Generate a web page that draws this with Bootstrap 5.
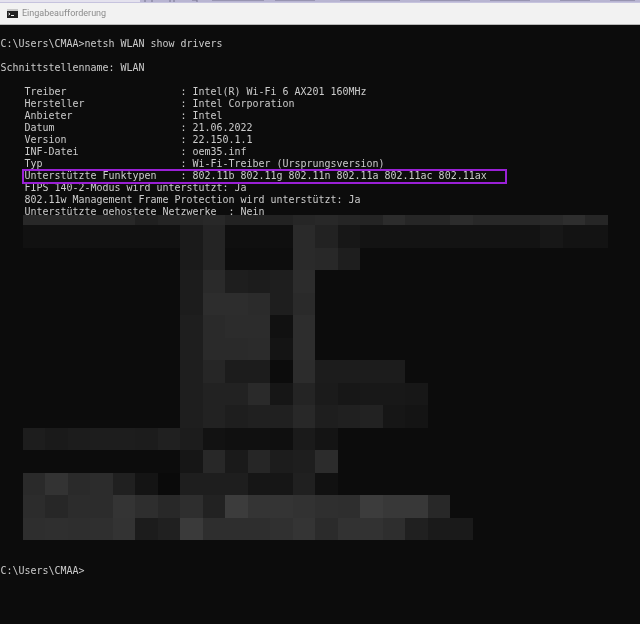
<!DOCTYPE html>
<html lang="de">
<head>
<meta charset="utf-8">
<title>Eingabeaufforderung</title>
<link href="https://cdn.jsdelivr.net/npm/bootstrap@5.3.0/dist/css/bootstrap.min.css" rel="stylesheet">
<style>
html,body{height:100%;background:#0c0c0c;overflow:hidden}
.top-strip{height:3px;display:block;width:100%}
.win-title{height:21px;background:#f2f2f2;border-bottom:1px solid #b9b9b9;box-sizing:content-box;padding-left:7px;gap:4px}
.win-title svg{flex:none}
.win-label{font:9px/1 Roboto,"Noto Sans",sans-serif;color:#8c8c8c;filter:blur(.25px)}
.console{position:relative;padding-top:13px;background:#0c0c0c;color:#cccccc}
.cline{font:9.98px/12px "DejaVu Sans Mono","Liberation Mono",monospace;height:12px;white-space:pre;filter:blur(.3px);margin:0;padding-left:.5px}
.mosaic{display:block;margin-top:-3px;filter:blur(.35px);position:relative}
.prompt-end{margin-top:25px}
.hl-box{position:absolute;left:22px;top:144px;width:485px;height:14.5px;border:2px solid #9a20d6}
</style>
</head>
<body>
<svg class="top-strip" viewBox="0 0 640 3" preserveAspectRatio="none" aria-hidden="true">
  <rect width="640" height="3" fill="#e4e2ee"/>
  <rect x="0" y="2" width="640" height="1" fill="#c6c3de"/>
  <rect x="140" y="0" width="500" height="2" fill="#b8b5d2"/>
  <path d="M145 0v2M152 0v2M170 0v2M174 0v2M192 0h5v2M212 0h52M275 0h40M340 0h60M420 0h50M490 0h40M560 0h30M610 0h25" stroke="#77758f" stroke-width="1" fill="none"/>
</svg>
<div class="win-title d-flex align-items-center">
  <svg width="11" height="9" viewBox="0 0 11 9" aria-hidden="true">
    <rect width="11" height="9" fill="#222"/>
    <rect width="11" height="2" fill="#c9c9c9"/>
    <path d="M1.500 4l1.500 1-1.500 1M4 6.500h3" stroke="#eee" stroke-width="1" fill="none"/>
  </svg>
  <span class="win-label">Eingabeaufforderung</span>
</div>
<main class="console">
  <pre class="cline">C:\Users\CMAA&gt;netsh WLAN show drivers</pre>
  <pre class="cline"> </pre>
  <pre class="cline">Schnittstellenname: WLAN</pre>
  <pre class="cline"> </pre>
  <pre class="cline">    Treiber                   : Intel(R) Wi-Fi 6 AX201 160MHz</pre>
  <pre class="cline">    Hersteller                : Intel Corporation</pre>
  <pre class="cline">    Anbieter                  : Intel</pre>
  <pre class="cline">    Datum                     : 21.06.2022</pre>
  <pre class="cline">    Version                   : 22.150.1.1</pre>
  <pre class="cline">    INF-Datei                 : oem35.inf</pre>
  <pre class="cline">    Typ                       : Wi-Fi-Treiber (Ursprungsversion)</pre>
  <pre class="cline">    Unterstützte Funktypen    : 802.11b 802.11g 802.11n 802.11a 802.11ac 802.11ax</pre>
  <pre class="cline">    FIPS 140-2-Modus wird unterstützt: Ja</pre>
  <pre class="cline">    802.11w Management Frame Protection wird unterstützt: Ja</pre>
  <pre class="cline">    Unterstützte gehostete Netzwerke  : Nein</pre>
  <svg class="mosaic" id="mosaic" width="640" height="325" viewBox="0 0 640 325" aria-hidden="true"></svg>
  <pre class="cline prompt-end">C:\Users\CMAA&gt;</pre>
  <div class="hl-box"></div>
</main>
<script>
// [row top, row bottom, first column, grey value per cell]
var rows=[
 [215,225,1,"28 28 28 28 28 20 24 26 28 22 22 22 26 28 25 24 2c 26 26 2c 28 28 28 2a 2e 26"],
 [225,247.5,1,"11 11 11 11 11 11 11 1a 24 0f 0f 0f 2a 22 17 13 13 13 13 13 13 13 13 17 13 13"],
 [247.5,270,8,"1a 24 0d 0d 0d 2a 28 1e"],
 [270,292.5,8,"1c 2a 1e 1c 1e 2c"],
 [292.5,315,8,"1c 2d 2d 2b 1e 2a"],
 [315,337.5,8,"1e 2a 2c 2c 11 2d"],
 [337.5,360,8,"1e 2a 2a 2b 14 2d"],
 [360,382.5,8,"1e 26 1c 1c 0c 2c 1c 1c 1c 1c"],
 [382.5,405,8,"1e 22 22 2a 16 24 1b 17 18 18 17"],
 [405,427.5,8,"1e 22 1e 20 20 28 1e 20 22 16 14"],
 [427.5,450,1,"1d 1a 1c 1d 1d 1c 20 1c 12 10 10 0f 1a 14"],
 [450,472.5,8,"16 28 1a 26 1c 1e 2c"],
 [472.5,495,1,"2a 33 2a 2c 20 14 0a 1e 1e 1e 16 16 20 11"],
 [495,517.5,1,"2c 27 2c 2c 34 2e 28 2e 22 3c 34 34 32 2f 2e 3c 38 38 28"],
 [517.5,540,1,"2e 2f 2e 2f 33 1c 20 3a 2e 2e 2e 30 34 2b 32 32 2e 20 1a 1a"]
];
var svg=document.getElementById('mosaic'),NS='http://www.w3.org/2000/svg';
rows.forEach(function(r){
  r[3].split(' ').forEach(function(v,i){
    var c=document.createElementNS(NS,'rect');
    c.setAttribute('x',(r[2]+i)*22.5);
    c.setAttribute('y',r[0]-215);
    c.setAttribute('width',22.5);
    c.setAttribute('height',r[1]-r[0]);
    c.setAttribute('fill','#'+v+v+v);
    c.setAttribute('shape-rendering','crispEdges');
    svg.appendChild(c);
  });
});
</script>
<script src="https://cdn.jsdelivr.net/npm/bootstrap@5.3.0/dist/js/bootstrap.bundle.min.js"></script>
</body>
</html>
